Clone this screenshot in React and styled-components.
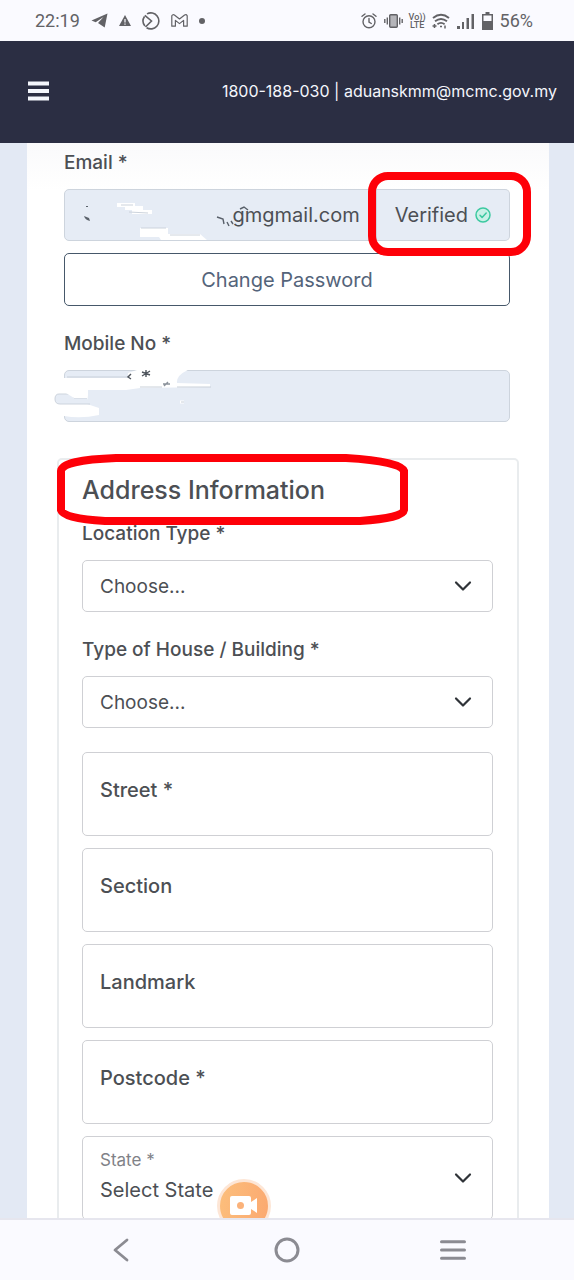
import React from 'react';
import styled, { createGlobalStyle } from 'styled-components';

const GlobalStyle = createGlobalStyle`
  * {
    box-sizing: border-box;
  }
  body {
    margin: 0;
    font-family: Inter, "Open Sans", sans-serif;
    color: #4c4f54;
  }
  button, input, select {
    font: inherit;
    color: inherit;
  }
`;

const Screen = styled.div`
  display: flex;
  flex-direction: column;
  height: 100vh;
  background: #e3e9f4;
`;

const StatusBar = styled.div`
  display: flex;
  flex: none;
  align-items: center;
  justify-content: space-between;
  height: 41px;
  padding: 0 41px 0 35px;
  background: #fafaff;
  color: #626266;
  font-family: Roboto, sans-serif;
  font-size: 18px;
`;

const StatusGroup = styled.div`
  display: flex;
  align-items: center;
  gap: ${(props) => props.$gap};
`;

const Volte = styled.span`
  display: flex;
  flex-direction: column;
  align-items: center;
  width: 15px;
  font-size: 9px;
  font-weight: 500;
  line-height: 8px;
`;

const Header = styled.header`
  display: flex;
  flex: none;
  align-items: center;
  justify-content: space-between;
  height: 102px;
  padding: 0 17px 2px 28px;
  background: #2b2e43;
  color: #f4f6fc;
  font-size: 16px;
`;

const IconButton = styled.button`
  display: flex;
  align-items: center;
  justify-content: center;
  padding: 0;
  border: 0;
  background: none;
  color: inherit;
`;

const ContactLink = styled.a`
  color: inherit;
  text-decoration: none;
`;

const Page = styled.main`
  flex: 1;
  min-height: 0;
  overflow: hidden;
  position: relative;
  padding: 0 25px 0 27px;
`;

const Card = styled.form`
  min-height: 100%;
  padding: 6px 39px 0 37px;
  background: linear-gradient(#fafafb, #ffffff 48px);
`;

const Field = styled.div`
  margin-bottom: 24px;
`;

const Label = styled.label`
  display: block;
  margin-bottom: 12px;
  font-size: 19px;
  font-weight: 500;
  line-height: 28px;
`;

const InputGroup = styled.div`
  display: flex;
  position: relative;
  margin-bottom: 12px;
`;

const Input = styled.input`
  flex: 1;
  width: 100%;
  min-width: 0;
  height: 52px;
  padding: 0 16px;
  border: 1px solid #cdd4dd;
  border-radius: ${(props) => (props.$joined ? '5px 0 0 5px' : '5px')};
  background: #e6ecf5;
  font-size: 20px;
  text-align: ${(props) => (props.$joined ? 'right' : 'left')};
  outline: none;
`;

const Verified = styled.span`
  display: flex;
  flex: none;
  align-items: center;
  gap: 7px;
  height: 52px;
  padding: 0 18px;
  border: 1px solid #cdd4dd;
  border-left-width: 0;
  border-radius: 0 5px 5px 0;
  background: #e6ecf5;
  font-size: 20px;
`;

const OutlineButton = styled.button`
  display: block;
  width: 100%;
  height: 53px;
  border: 1px solid #46586a;
  border-radius: 5px;
  background: #ffffff;
  color: #54647a;
  font-size: 20px;
`;

const Smudge = styled.svg`
  position: absolute;
  top: 0;
  left: -10px;
  pointer-events: none;
`;

const VerifiedMark = styled.span`
  position: absolute;
  top: -17px;
  right: -21px;
  bottom: -15px;
  width: 163px;
  border: 8px solid #fe0008;
  border-radius: 20px;
  pointer-events: none;
`;

const AddressBox = styled.section`
  position: relative;
  margin: 36px -9px 0 -7px;
  padding: 12px 24px 12px 23px;
  border: 2px solid #e9ecee;
  border-radius: 5px;
`;

const AddressMark = styled.svg`
  position: absolute;
  top: -6px;
  left: -2px;
  pointer-events: none;
`;

const Heading = styled.h2`
  margin: 0 0 12px;
  font-size: 25px;
  font-weight: 500;
  line-height: 36px;
`;

const SelectBox = styled.div`
  display: grid;
  align-items: center;
  border: 1px solid #cfd0d4;
  border-radius: 5px;
  background: #ffffff;
  > * {
    grid-area: 1 / 1;
  }
  > svg {
    justify-self: end;
    margin-right: 20px;
    pointer-events: none;
  }
`;

const Select = styled.select`
  appearance: none;
  width: 100%;
  height: ${(props) => (props.$tall ? '82px' : '50px')};
  padding: ${(props) => (props.$tall ? '24px 17px 0' : '0 17px')};
  border: 0;
  border-radius: 5px;
  background: transparent;
  font-size: ${(props) => (props.$tall ? '20px' : '19px')};
`;

const FloatBox = styled.div`
  display: grid;
  align-items: center;
  margin-bottom: 12px;
  border: 1px solid #cfd0d4;
  border-radius: 5px;
  background: #ffffff;
  > * {
    grid-area: 1 / 1;
  }
`;

const FloatInput = styled.input`
  width: 100%;
  height: 82px;
  padding: 24px 17px 0;
  border: 0;
  background: transparent;
  font-size: 20px;
`;

const FloatLabel = styled.label`
  padding: 0 17px 8px;
  font-size: 20px;
  font-weight: 500;
  pointer-events: none;
`;

const SmallLabel = styled.label`
  align-self: start;
  padding: 12px 17px 0;
  color: #808287;
  font-size: 17px;
  line-height: 22px;
  pointer-events: none;
`;

const RecordBubble = styled.button`
  position: absolute;
  bottom: -15px;
  left: 217px;
  display: flex;
  align-items: center;
  justify-content: center;
  width: 54px;
  height: 54px;
  padding: 0;
  border: 3px solid #fde6d6;
  border-radius: 50%;
  background: linear-gradient(100deg, #fcbf7c, #fba870);
`;

const NavBar = styled.nav`
  display: grid;
  grid-template-columns: repeat(3, 1fr);
  flex: none;
  align-items: center;
  height: 62px;
  padding: 0 38px;
  border-top: 2px solid #e6e6ee;
  background: #fafaff;
  color: #8b8b92;
`;

const Chevron = () => (
  <svg width="18" height="12" viewBox="0 0 18 12" fill="none" stroke="#2f3338" strokeWidth="2.2" strokeLinecap="round" strokeLinejoin="round">
    <path d="M2 2.5l7 7 7-7" />
  </svg>
);

const TextField = ({ id, label }) => (
  <FloatBox>
    <FloatInput id={id} type="text" />
    <FloatLabel htmlFor={id}>{label}</FloatLabel>
  </FloatBox>
);

const ChooseField = ({ id, label }) => (
  <Field>
    <Label htmlFor={id}>{label}</Label>
    <SelectBox>
      <Select id={id}>
        <option>Choose...</option>
      </Select>
      <Chevron />
    </SelectBox>
  </Field>
);

const Status = () => (
  <StatusBar>
    <StatusGroup $gap="11px">
      <span>22:19</span>
      <svg width="17" height="15" viewBox="0 0 17 15" fill="currentColor">
        <path d="M16.5 0.5L0.5 7.5l4.2 1.7L12.5 4 7 10l6.7 4.5z" />
      </svg>
      <svg width="12" height="11" viewBox="0 0 12 11">
        <path d="M6 0l6 11H0z" fill="currentColor" />
        <path d="M6 4v3.4M6 8.5v1.2" stroke="#fafaff" strokeWidth="1.2" />
      </svg>
      <svg width="18" height="18" viewBox="0 0 18 18" fill="none" stroke="currentColor" strokeWidth="1.6">
        <path d="M5 1.9A8 8 0 1 1 4.6 15.7M2.9 14A8 8 0 0 1 2.5 4.5M2.8 3.4L9.5 9l-6 6" />
      </svg>
      <svg width="17" height="13" viewBox="0 0 17 13" fill="none" stroke="currentColor" strokeWidth="1.2" strokeLinejoin="round">
        <path d="M0.8 12.2V1.8Q1.8 0 3.4 1L8.5 5l5.1-4q1.8-.8 2.6.8v10.4h-3.6V6.4L8.5 9.6 4.4 6.4v5.8z" />
      </svg>
      <svg width="12" height="6" viewBox="4 0 12 6">
        <circle cx="7" cy="3" r="3" fill="currentColor" />
      </svg>
    </StatusGroup>
    <StatusGroup $gap="7px">
      <svg width="16" height="16" viewBox="0 0 16 16" fill="none" stroke="currentColor" strokeWidth="1.4" strokeLinecap="round">
        <circle cx="8" cy="8.8" r="6" />
        <path d="M8 5.5v3.6l2.3 1.4M1 3.3L4 1M15 3.3L12 1" />
      </svg>
      <svg width="19" height="14" viewBox="0 0 19 14" fill="none" stroke="currentColor" strokeWidth="1.4">
        <rect x="5.7" y="0.7" width="7.6" height="12.6" rx="1" fill="#b5b5ba" />
        <path d="M3.3 3.5v7M0.8 5v4M15.7 3.5v7M18.2 5v4" />
      </svg>
      <Volte>
        <span>Vo))</span>
        <span>LTE</span>
      </Volte>
      <svg width="18" height="16" viewBox="0 0 18 16" fill="none" stroke="currentColor" strokeWidth="1.9">
        <path d="M1 5Q9-1.5 17 5M3 8.2q6-4.6 12 0M5.4 11.2q3.6-2.6 7.2 0" />
        <path d="M0.5 13h4M2.5 11v4M8 13.6h2M13 12.5v3" strokeWidth="1.5" />
      </svg>
      <svg width="18" height="16" viewBox="0 0 18 16" fill="currentColor">
        <path d="M0 13h3v3H0zM5 9h2v7H5zM9.5 5H12v11H9.5zM14.5 1H17v15h-2.5z" />
      </svg>
      <svg width="11" height="18" viewBox="0 0 11 18">
        <path d="M3.5 0h4v2H11v16H0V2h3.5z" fill="currentColor" />
        <path d="M1.5 3.5h8V9h-8z" fill="#fafaff" />
      </svg>
      <span>56%</span>
    </StatusGroup>
  </StatusBar>
);

const App = () => {
  return (
    <Screen>
      <GlobalStyle />
      <Status />
      <Header>
        <IconButton type="button" aria-label="Menu">
          <svg width="21" height="20" viewBox="0 0 21 20" fill="none" stroke="currentColor" strokeWidth="4">
            <path d="M0 2.5h21M0 10h21M0 17.5h21" />
          </svg>
        </IconButton>
        <div>
          <ContactLink href="tel:1800188030">1800-188-030</ContactLink> |{' '}
          <ContactLink href="mailto:aduanskmm@mcmc.gov.my">aduanskmm@mcmc.gov.my</ContactLink>
        </div>
      </Header>
      <Page>
        <Card>
          <Field>
            <Label htmlFor="email">Email *</Label>
            <InputGroup>
              <Input id="email" type="text" value="gmgmail.com" readOnly $joined />
              <Verified>
                Verified
                <svg width="16" height="16" viewBox="0 0 16 16" fill="#c9f1e7" stroke="#3cc9a0" strokeWidth="1.5" strokeLinecap="round" strokeLinejoin="round">
                  <circle cx="8" cy="8" r="7" />
                  <path d="M5 8.3l2.1 2.1L11.2 6" fill="none" />
                </svg>
              </Verified>
              <Smudge width="250" height="52" viewBox="54 189 250 52" fill="none">
                <path d="M117 203h18v3h8v4h9v4h-20v-4h-7v-3h-8zM140 228h28v6h32l7 6h-46l-2-3h-19z" fill="#fff" />
                <path d="M121 205h12M129 212l19 1M141 228h25M170 235h30" stroke="#ccd3dc" />
                <path d="M84 216q1 4 6 5l-1-3zM86 206h2v1h-2z" fill="#5b626b" />
                <path d="M217 217l6 2 1 5M227 222l2 4M231 221l2 3M240 209l4-2 4 3" stroke="#59606a" strokeWidth="1.4" />
              </Smudge>
              <VerifiedMark />
            </InputGroup>
            <OutlineButton type="button">Change Password</OutlineButton>
          </Field>
          <Field>
            <Label htmlFor="mobile">Mobile No *</Label>
            <InputGroup>
              <Input id="mobile" type="text" readOnly />
              <Smudge width="250" height="52" viewBox="54 369 250 52" fill="none">
                <path d="M64 377h64v-5l12-4h50q-14 6-13 14l33 1v3l-70 1-14 2H88v5l-1 9 12 4v7q-18 4-35 1z" fill="#fff" />
                <path d="M67 376h61M140 386h22M177 386h34" stroke="#c9d0d9" />
                <path d="M87 397H74l-2-4H59q-4 0-4 5t5 5h30" fill="#e6ecf5" stroke="#cdd4dd" />
                <path d="M66 392h21v5H74z" fill="#fff" />
                <path d="M131 373l-3 3 3 2M146 369v7M142 371l8 3M150 370l-8 5" stroke="#4f555d" strokeWidth="1.4" />
                <path d="M163 383h7M164 385l4-4" stroke="#8b929b" strokeWidth="1.4" />
                <path d="M180 401h4" stroke="#fff" strokeWidth="3" />
                <path d="M181 401h3" stroke="#c9d0d9" />
              </Smudge>
            </InputGroup>
          </Field>
          <AddressBox>
            <Heading>Address Information</Heading>
            <ChooseField id="location" label="Location Type *" />
            <ChooseField id="building" label="Type of House / Building *" />
            <TextField id="street" label="Street *" />
            <TextField id="section" label="Section" />
            <TextField id="landmark" label="Landmark" />
            <TextField id="postcode" label="Postcode *" />
            <SelectBox>
              <Select id="state" $tall>
                <option>Select State</option>
              </Select>
              <SmallLabel htmlFor="state">State *</SmallLabel>
              <Chevron />
            </SelectBox>
            <AddressMark width="352" height="72" viewBox="57 454 352 72" fill="none" stroke="#fe0008" strokeWidth="8">
              <path d="M61 471Q62 460 116 458H346Q400 461 404 471V510Q403 518 360 521H105Q64 519 61 510Z" />
            </AddressMark>
          </AddressBox>
        </Card>
        <RecordBubble type="button" aria-label="Record screen">
          <svg width="28" height="20" viewBox="0 0 28 20">
            <path d="M2 0h17q2 0 2 2v4l6-4v15l-6-4v4q0 2-2 2H2q-2 0-2-2V2q0-2 2-2z" fill="#fff" />
            <circle cx="10.500" cy="9.500" r="3.500" fill="#fbb27a" />
          </svg>
        </RecordBubble>
      </Page>
      <NavBar>
        <IconButton type="button" aria-label="Back">
          <svg width="16" height="24" viewBox="0 0 16 24" fill="none" stroke="currentColor" strokeWidth="2.8" strokeLinecap="round" strokeLinejoin="round">
            <path d="M14 2L2 12l12 10" />
          </svg>
        </IconButton>
        <IconButton type="button" aria-label="Home">
          <svg width="26" height="26" viewBox="0 0 26 26" fill="none" stroke="currentColor" strokeWidth="3">
            <circle cx="13" cy="13" r="11" />
          </svg>
        </IconButton>
        <IconButton type="button" aria-label="Recent apps">
          <svg width="26" height="20" viewBox="0 0 26 20" fill="none" stroke="currentColor" strokeWidth="3" strokeLinecap="round">
            <path d="M1.500 1.700h23M1.500 10h23M1.500 18.300h23" />
          </svg>
        </IconButton>
      </NavBar>
    </Screen>
  );
};

export default App;
